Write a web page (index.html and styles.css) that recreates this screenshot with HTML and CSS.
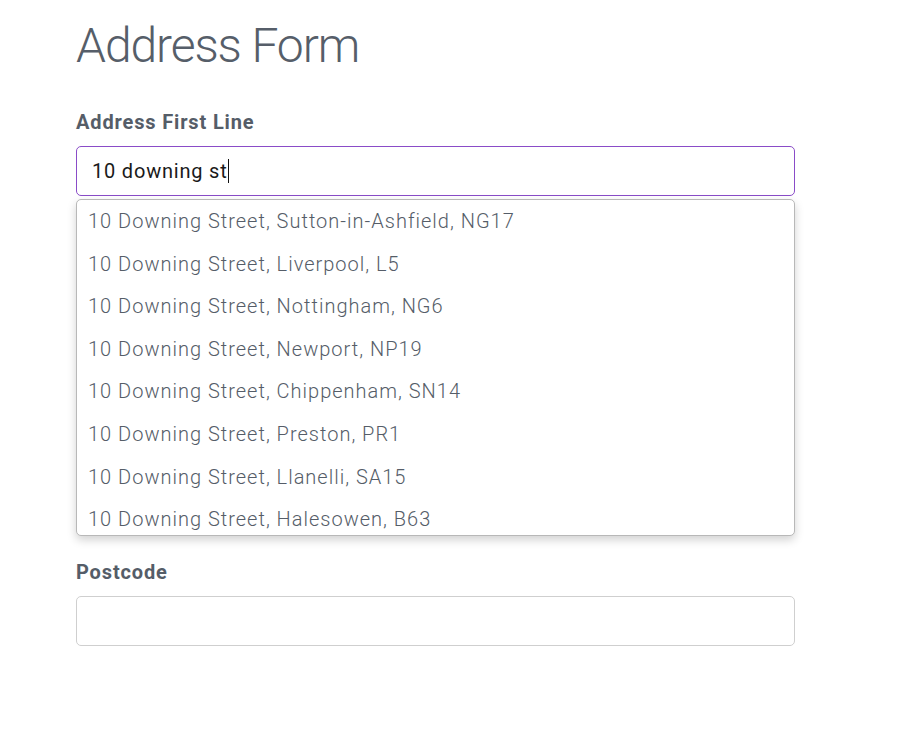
FILE: index.html
```html
<!DOCTYPE html>
<html>
<head>
<meta charset="utf-8">
<link rel="stylesheet" href="styles.css">
</head>
<body>
<main class="page">
  <h1 class="title">Address Form</h1>
  <div class="field">
    <label class="label" for="line1">Address First Line</label>
    <div class="combo">
      <div class="input focused" id="line1"><span class="value">10 downing st</span><span class="caret"></span></div>
      <ul class="menu">
        <li>10 Downing Street, Sutton-in-Ashfield, NG17</li>
        <li>10 Downing Street, Liverpool, L5</li>
        <li>10 Downing Street, Nottingham, NG6</li>
        <li>10 Downing Street, Newport, NP19</li>
        <li>10 Downing Street, Chippenham, SN14</li>
        <li>10 Downing Street, Preston, PR1</li>
        <li>10 Downing Street, Llanelli, SA15</li>
        <li>10 Downing Street, Halesowen, B63</li>
      </ul>
    </div>
  </div>
  <div class="field postcode">
    <label class="label" for="pc">Postcode</label>
    <div class="input" id="pc"></div>
  </div>
</main>
</body>
</html>
```
FILE: styles.css
```css
* { box-sizing: border-box; }
html, body { margin: 0; padding: 0; background: #fff; }
body { font-family: Roboto, "Noto Sans", sans-serif; color: #555d68; }
.page { width: 719px; margin-left: 76px; padding-top: 17px; }
.title {
  margin: 0;
  font-size: 48px;
  font-weight: 300;
  line-height: 58px;
  color: #565e69;
  letter-spacing: -1.1px;
}
.field { display: flex; flex-direction: column; }
.label {
  margin-top: 35px;
  font-size: 20px;
  font-weight: 700;
  line-height: 24px;
  color: #555d68;
  letter-spacing: 0.85px;
}
.combo { position: relative; margin-top: 12px; }
.input {
  height: 50px;
  border: 1px solid #cfcfcf;
  border-radius: 5px;
  display: flex;
  align-items: center;
  padding-left: 15px;
  font-size: 20px;
  color: #1a1a1a;
  letter-spacing: 0.8px;
}
.input.focused { border-color: #8a4cc8; }
.caret { display: inline-block; width: 1px; height: 24px; background: #111; margin-left: 0; }
.menu {
  list-style: none;
  margin: 3px 0 0;
  padding: 0;
  height: 337px;
  overflow: hidden;
  border: 1px solid #b8b8b8;
  border-radius: 5px;
  box-shadow: 0 4px 10px rgba(0,0,0,0.18);
  background: #fff;
}
.menu li {
  height: 42.6px;
  line-height: 42.6px;
  padding-left: 11px;
  font-size: 20px;
  font-weight: 300;
  color: #555d68;
  letter-spacing: 1px;
  white-space: nowrap;
}
.postcode .label { margin-top: 24px; }
.postcode .input { margin-top: 12px; }
```
